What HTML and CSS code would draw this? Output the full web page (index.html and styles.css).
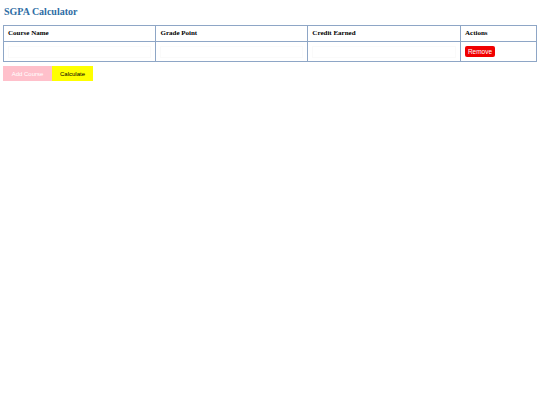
FILE: index.html
```html
<!DOCTYPE html>
<html>
<head>
<meta charset="utf-8">
<link rel="stylesheet" href="styles.css">
</head>
<body>
<h2 class="title">SGPA Calculator</h2>
<table class="grid">
  <thead>
    <tr><th>Course Name</th><th>Grade Point</th><th>Credit Earned</th><th class="act">Actions</th></tr>
  </thead>
  <tbody>
    <tr>
      <td><input class="field" type="text"></td>
      <td><input class="field" type="text"></td>
      <td><input class="field" type="text"></td>
      <td class="act"><button class="remove">Remove</button></td>
    </tr>
  </tbody>
</table>
<div class="buttons">
  <button class="add">Add Course</button><button class="calc">Calculate</button>
</div>
</body>
</html>
```
FILE: styles.css
```css
body {
  margin: 0;
  padding: 3px;
  font-family: "Liberation Serif", serif;
  background: #fff;
}
.title {
  margin: 3px 0 7px 1px;
  font-size: 10px;
  font-weight: bold;
  color: #2e6da4;
  line-height: 12px;
}
.grid {
  width: 534px;
  border-collapse: collapse;
}
.grid th, .grid td {
  border: 1px solid #8ea6c6;
  text-align: left;
  padding: 3px 4px;
  font-size: 7px;
  line-height: 9px;
  vertical-align: middle;
}
.grid th {
  height: 9px;
  font-weight: bold;
  color: #000;
}
.grid td {
  height: 13px;
}
.grid .act {
  width: 67px;
}
.field {
  box-sizing: border-box;
  width: 100%;
  height: 12px;
  border: 1px solid #fafafa;
  padding: 0;
  margin: 0;
  display: block;
}
.remove {
  background: #f00000;
  color: #fff;
  border: none;
  border-radius: 2px;
  font-family: "Liberation Sans", sans-serif;
  font-size: 6.5px;
  height: 11px;
  width: 30px;
  padding: 0;
  display: block;
}
.buttons {
  display: flex;
  margin-top: 4px;
}
.buttons button {
  border: none;
  font-family: "Liberation Sans", sans-serif;
  font-size: 6px;
  height: 15px;
  padding: 0 8px;
}
.add {
  background: #ffc0cb;
  color: #fff;
  width: 49px;
}
.calc {
  background: #ffff00;
  color: #000;
  width: 41px;
}
```
